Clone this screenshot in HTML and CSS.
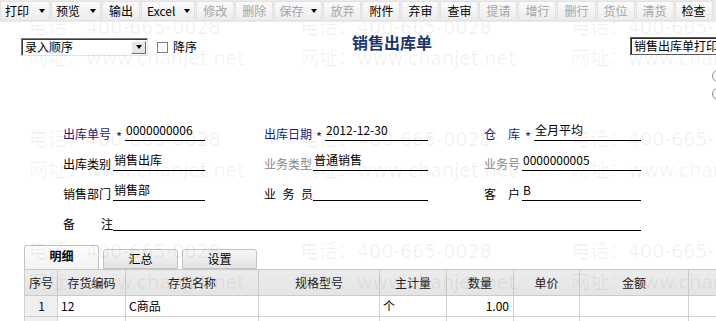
FILE: index.html
```html
<!DOCTYPE html>
<html lang="zh-CN">
<head>
    <meta charset="UTF-8">
    <title>销售出库单</title>
    <link rel="stylesheet" href="styles.css">
</head>
<body>
    <div class="toolbar">
        <span class="tool dd">打印<i class="caret"></i></span>
        <span class="tool dd">预览<i class="caret"></i></span>
        <span class="tool">输出</span>
        <span class="tool dd excel">Excel<i class="caret"></i></span>
        <span class="tool off">修改</span>
        <span class="tool off">删除</span>
        <span class="tool dd off">保存<i class="caret"></i></span>
        <span class="tool off">放弃</span>
        <span class="tool">附件</span>
        <span class="tool">弃审</span>
        <span class="tool">查审</span>
        <span class="tool off">提请</span>
        <span class="tool off">增行</span>
        <span class="tool off">删行</span>
        <span class="tool off">货位</span>
        <span class="tool off">清货</span>
        <span class="tool">检查</span>
    </div>

    <div class="page">
        <div class="head">
            <div class="sort">
                <div class="select">
                    <span>录入顺序</span>
                    <b class="drop"><i class="caret"></i></b>
                </div>
                <label class="check"><span class="box"></span>降序</label>
            </div>
            <h1 class="title">销售出库单</h1>
            <div class="print">
                <div class="print-select">销售出库单打印模版</div>
                <div class="radios">
                    <span class="radio"></span>
                    <span class="radio"></span>
                </div>
            </div>
        </div>

        <div class="form">
            <div class="field c1">
                <span class="label must">出库单号</span><span class="star">*</span>
                <span class="value">0000000006</span>
            </div>
            <div class="field c2">
                <span class="label must">出库日期</span><span class="star">*</span>
                <span class="value">2012-12-30</span>
            </div>
            <div class="field c3">
                <span class="label must spread">仓 库</span><span class="star">*</span>
                <span class="value">全月平均</span>
            </div>

            <div class="field c1">
                <span class="label">出库类别</span>
                <span class="value">销售出库</span>
            </div>
            <div class="field c2">
                <span class="label dim">业务类型</span>
                <span class="value">普通销售</span>
            </div>
            <div class="field c3">
                <span class="label dim">业务号</span>
                <span class="value">0000000005</span>
            </div>

            <div class="field c1">
                <span class="label">销售部门</span>
                <span class="value">销售部</span>
            </div>
            <div class="field c2">
                <span class="label spread">业 务 员</span>
                <span class="value"></span>
            </div>
            <div class="field c3">
                <span class="label spread">客 户</span>
                <span class="value">B</span>
            </div>

            <div class="field wide">
                <span class="label spread">备 注</span>
                <span class="value"></span>
            </div>
        </div>

        <div class="tabs">
            <span class="tab active">明细</span>
            <span class="tab">汇总</span>
            <span class="tab">设置</span>
        </div>

        <table class="grid">
            <colgroup>
                <col class="w-no"><col class="w-code"><col class="w-name"><col class="w-spec">
                <col class="w-unit"><col class="w-qty"><col class="w-price"><col class="w-sum"><col class="w-rest">
            </colgroup>
            <thead>
                <tr>
                    <th>序号</th><th>存货编码</th><th>存货名称</th><th>规格型号</th>
                    <th>主计量</th><th>数量</th><th>单价</th><th>金额</th><th></th>
                </tr>
            </thead>
            <tbody>
                <tr>
                    <td class="no">1</td><td>12</td><td>C商品</td><td></td>
                    <td>个</td><td class="num">1.00</td><td></td><td></td><td></td>
                </tr>
                <tr>
                    <td class="no"></td><td></td><td></td><td></td>
                    <td></td><td></td><td></td><td></td><td></td>
                </tr>
            </tbody>
        </table>

        <div class="watermark">
            <div class="mark"><p>电话：400-665-0028</p><p>网址：www.chanjet.net</p></div>
            <div class="mark"><p>电话：400-665-0028</p><p>网址：www.chanjet.net</p></div>
            <div class="mark"><p>电话：400-665-0028</p><p>网址：www.chanjet.net</p></div>
            <div class="mark"><p>电话：400-665-0028</p><p>网址：www.chanjet.net</p></div>
            <div class="mark"><p>电话：400-665-0028</p><p>网址：www.chanjet.net</p></div>
            <div class="mark"><p>电话：400-665-0028</p><p>网址：www.chanjet.net</p></div>
            <div class="mark"><p>电话：400-665-0028</p><p>网址：www.chanjet.net</p></div>
            <div class="mark"><p>电话：400-665-0028</p><p>网址：www.chanjet.net</p></div>
            <div class="mark"><p>电话：400-665-0028</p><p>网址：www.chanjet.net</p></div>
        </div>
    </div>
</body>
</html>
```

FILE: styles.css
```css
body {
    margin: 0;
    width: 716px;
    height: 321px;
    overflow: hidden;
    background: #fff;
    font-family: "Noto Sans CJK SC", "Liberation Sans", sans-serif;
    font-size: 12px;
    color: #000;
}

/* toolbar */
.toolbar {
    height: 22px;
    display: flex;
    align-items: center;
    gap: 1px;
    background: #ebebeb;
    position: relative;
    z-index: 2;
}
.tool {
    height: 20px;
    display: flex;
    align-items: center;
    padding: 0 6px;
    line-height: 20px;
    background: linear-gradient(#fbfbfb, #ececec);
    border: 1px solid #e2e2e2;
    border-radius: 2px;
    box-sizing: border-box;
    white-space: nowrap;
}
.tool.dd { padding: 0 4px; }
.tool.excel { padding-left: 5px; }
.tool.off { color: #a5a5a5; }
.caret {
    display: inline-block;
    width: 0;
    height: 0;
    margin-left: 10px;
    border-left: 3px solid transparent;
    border-right: 3px solid transparent;
    border-top: 4px solid #000;
}
.tool.excel .caret { margin-left: 9px; }
.tool.off .caret { margin-left: 8px; }

/* page */
.page {
    position: relative;
    height: 299px;
    overflow: hidden;
}
.head {
    height: 96px;
    display: flex;
    align-items: flex-start;
    padding-top: 16px;
    box-sizing: border-box;
}
.sort {
    width: 352px;
    flex: none;
    padding-left: 21px;
    box-sizing: border-box;
    display: flex;
    align-items: center;
}
.select {
    width: 127px;
    height: 18px;
    box-sizing: border-box;
    display: flex;
    align-items: center;
    justify-content: space-between;
    border: 1px solid;
    border-color: #7c7c7c #e4e4e4 #e4e4e4 #7c7c7c;
    box-shadow: inset 1px 1px 0 #3c3c3c;
    padding: 0 1px 0 3px;
    line-height: 16px;
}
.drop {
    width: 15px;
    height: 13px;
    display: flex;
    align-items: center;
    justify-content: center;
    background: #e6e6e6;
    border: 1px solid;
    border-color: #fff #6f6f6f #6f6f6f #fff;
    box-sizing: border-box;
}
.drop .caret { margin-left: 0; }
.check {
    display: flex;
    align-items: center;
    gap: 5px;
    margin-left: 9px;
    line-height: 16px;
}
.box {
    width: 11px;
    height: 11px;
    box-sizing: border-box;
    border: 1px solid #7a7a7a;
    background: #fff;
}
.title {
    width: 278px;
    flex: none;
    margin: -6px 0 0 0;
    font-size: 16px;
    line-height: 20px;
    font-weight: 700;
    color: #1b366f;
}
.print {
    display: flex;
    flex-direction: column;
    width: 100px;
    flex: none;
}
.print-select {
    height: 18px;
    width: 100px;
    box-sizing: border-box;
    border: 1px solid #5e5e5e;
    box-shadow: inset 1px 1px 0 #2a2a2a;
    padding-left: 3px;
    line-height: 16px;
    white-space: nowrap;
    overflow: hidden;
    margin-top: -1px;
}
.radios {
    display: flex;
    flex-direction: column;
    gap: 6px;
    margin: 15px 0 0 82px;
}
.radio {
    width: 12px;
    height: 12px;
    border-radius: 50%;
    border: 1px solid #8a8a8a;
    box-sizing: border-box;
    background: #fff;
}

/* form */
.form {
    display: grid;
    grid-template-columns: 201px 220px 157px;
    grid-template-rows: 23px 23px 23px 23px;
    row-gap: 7px;
    padding-left: 63px;
}
.field {
    display: flex;
    align-items: flex-end;
}
.field.c1 { width: 142px; }
.field.c2 { width: 164px; }
.field.c3 { width: 157px; }
.field.wide {
    grid-column: 1 / 4;
    width: 578px;
    margin-top: 4px;
}
.label {
    width: 50px;
    flex: none;
    line-height: 15px;
    white-space: nowrap;
}
.c2 .label { width: 49px; }
.c3 .label { width: 38px; }
.label.spread {
    text-align: justify;
    text-align-last: justify;
}
.c3 .label.spread { width: 36px; margin-right: 2px; }
.label.must { color: #1c1c78; }
.label.dim { color: #8a8a8a; }
.star {
    width: 12px;
    flex: none;
    text-align: center;
    color: #1c1c78;
    font-size: 13px;
    line-height: 15px;
    margin-bottom: -3px;
}
.value {
    flex: 1;
    border-bottom: 1px solid #000;
    line-height: 14px;
    padding: 0 0 3px 1px;
    white-space: nowrap;
    min-height: 14px;
}

/* tabs */
.tabs {
    display: flex;
    align-items: flex-end;
    gap: 4px;
    margin: 14px 0 0 24px;
    height: 24px;
}
.tab {
    width: 75px;
    height: 20px;
    box-sizing: border-box;
    text-align: center;
    line-height: 18px;
    border: 1px solid #c2c2c2;
    border-radius: 3px 3px 0 0;
    background: linear-gradient(#f6f6f6, #e3e3e3);
}
.tab.active {
    height: 24px;
    line-height: 20px;
    border-bottom: none;
    background: linear-gradient(#fdfdfd, #f3f3f3);
    font-weight: 700;
}

/* grid */
.grid {
    margin-left: 24px;
    width: 732px;
    table-layout: fixed;
    border-collapse: collapse;
}
.w-no { width: 33px; }
.w-code { width: 68px; }
.w-name { width: 133px; }
.w-spec { width: 121px; }
.w-unit { width: 67px; }
.w-qty { width: 67px; }
.w-price { width: 66px; }
.w-sum { width: 109px; }
.w-rest { width: 68px; }
.grid th {
    height: 25px;
    padding: 0;
    font-weight: 400;
    color: #222;
    background: linear-gradient(#ececec, #e4e4e4);
    border: 1px solid #cbcbcb;
    text-align: center;
    white-space: nowrap;
}
.grid td {
    height: 20px;
    padding: 0 2px 0 3px;
    border: 1px solid #d0d0d0;
    line-height: 18px;
    white-space: nowrap;
}
.grid td.no {
    text-align: center;
    background: #efefef;
}
.grid td.num {
    text-align: right;
    padding-right: 4px;
}

/* watermark */
.watermark {
    position: absolute;
    top: -10px;
    left: 29px;
    display: grid;
    grid-template-columns: repeat(3, 271px);
    grid-auto-rows: 112px;
    pointer-events: none;
    font-family: "DejaVu Sans", "Noto Sans CJK SC", sans-serif;
    font-size: 19px;
    color: rgba(0, 0, 0, 0.06);
}
.mark p {
    margin: 0;
    line-height: 31px;
    white-space: nowrap;
}
```
